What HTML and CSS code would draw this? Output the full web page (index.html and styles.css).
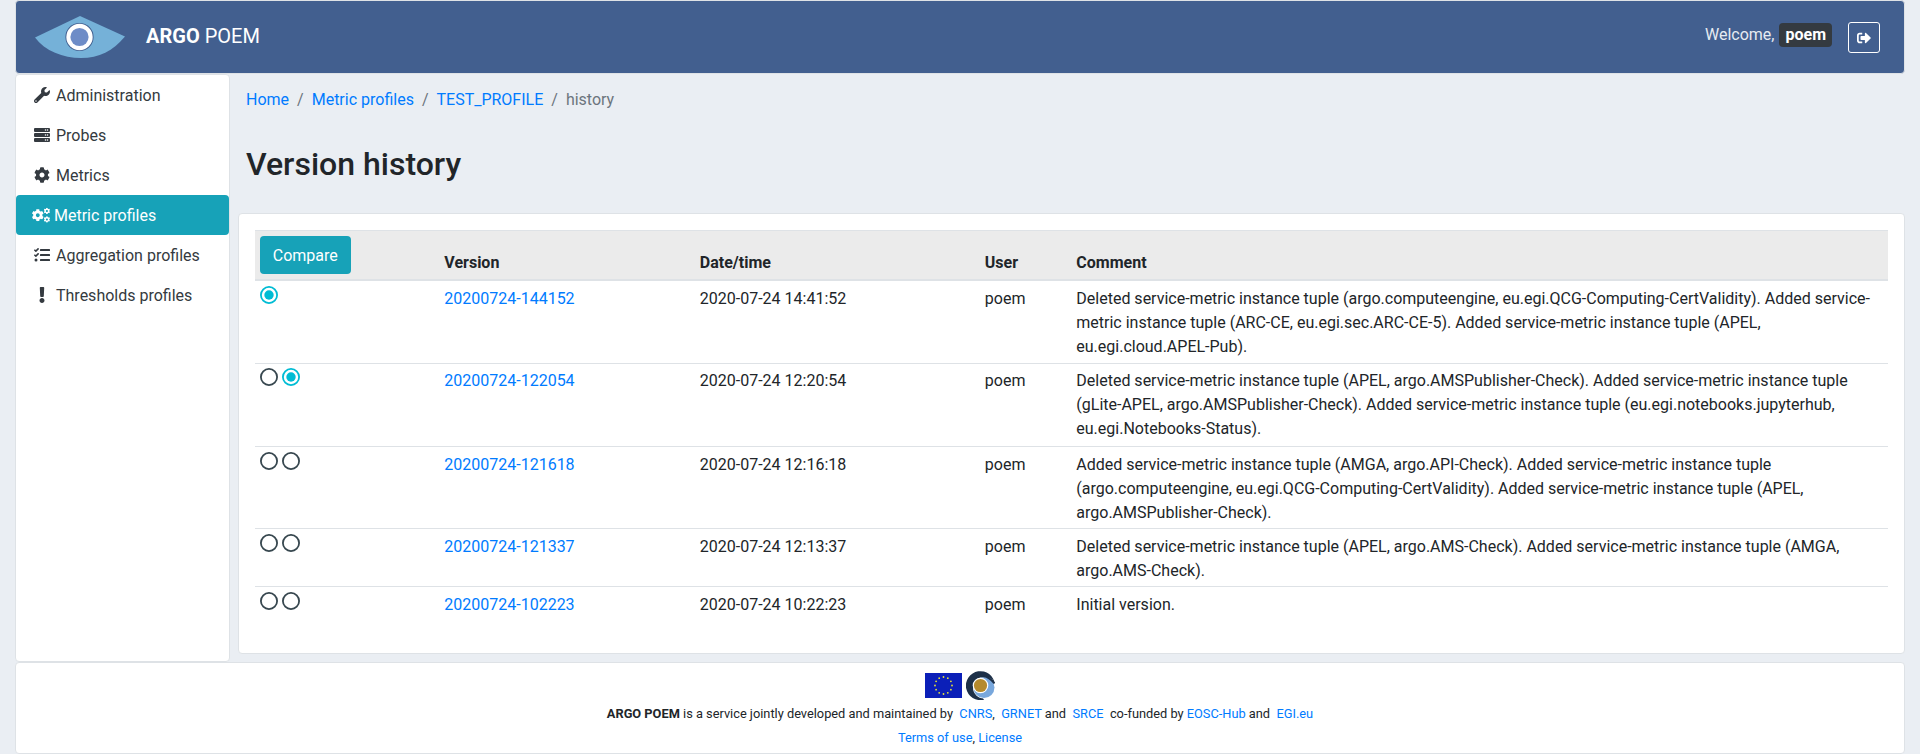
FILE: index.html
```html
<!DOCTYPE html>
<html lang="en">
<head>
<meta charset="utf-8">
<title>ARGO POEM</title>
<link rel="stylesheet" href="styles.css">
</head>
<body>
<svg class="defs" width="0" height="0">
  <symbol id="cog" viewBox="0 0 512 512"><path d="M487.4 315.7l-42.6-24.6c4.3-23.2 4.3-47 0-70.2l42.6-24.6c4.9-2.8 7.1-8.6 5.5-14-11.1-35.6-30-67.8-54.7-94.6-3.8-4.1-10-5.1-14.8-2.3L380.8 110c-17.9-15.4-38.5-27.3-60.8-35.1V25.8c0-5.6-3.9-10.5-9.4-11.7-36.7-8.2-74.3-7.8-109.2 0-5.5 1.2-9.4 6.1-9.4 11.7V75c-22.2 7.9-42.8 19.8-60.8 35.1L88.7 85.5c-4.9-2.8-11-1.9-14.8 2.3-24.7 26.7-43.6 58.9-54.7 94.6-1.7 5.4.6 11.2 5.5 14L67.3 221c-4.3 23.2-4.3 47 0 70.2l-42.6 24.6c-4.9 2.8-7.1 8.6-5.5 14 11.1 35.6 30 67.8 54.7 94.6 3.8 4.1 10 5.1 14.8 2.3l42.6-24.6c17.9 15.4 38.5 27.3 60.8 35.1v49.2c0 5.6 3.9 10.5 9.4 11.7 36.7 8.2 74.3 7.8 109.2 0 5.5-1.2 9.4-6.1 9.4-11.7v-49.2c22.2-7.9 42.8-19.8 60.8-35.1l42.6 24.6c4.9 2.8 11 1.9 14.8-2.3 24.7-26.7 43.6-58.9 54.7-94.6 1.5-5.5-.7-11.3-5.6-14.1zM256 336c-44.1 0-80-35.9-80-80s35.9-80 80-80 80 35.9 80 80-35.9 80-80 80z"/></symbol>
  <symbol id="radio-off" viewBox="0 0 18 18"><circle cx="9" cy="9" r="8.1" fill="#fff" stroke="#37474f" stroke-width="1.8"/></symbol>
  <symbol id="radio-on" viewBox="0 0 18 18"><circle cx="9" cy="9" r="8.1" fill="#fff" stroke="#00bcd4" stroke-width="1.8"/><circle cx="9" cy="9" r="4.7" fill="#00bcd4"/></symbol>
</svg>
<div class="container">
  <header class="navbar">
    <svg class="logo" viewBox="0 0 90 42"><path d="M0 21.5L45 0l45 20.5C78 35 64 42 46 42S10 35 0 21.5z" fill="#75b1d8"/><circle cx="44.5" cy="21" r="14.1" fill="#3f5d8e"/><circle cx="44.5" cy="21" r="13.2" fill="#fff"/><circle cx="44.5" cy="21" r="9.1" fill="#6d8cc7"/></svg>
    <span class="brand"><strong>ARGO</strong> POEM</span>
    <span class="welcome">Welcome, <span class="user">poem</span></span>
    <button class="logout" aria-label="Log out"><svg viewBox="0 0 512 512" width="14" height="14"><path d="M497 273L329 441c-15 15-41 4.500-41-17v-96H152c-13.300 0-24-10.700-24-24v-96c0-13.300 10.700-24 24-24h136V88c0-21.400 25.900-32 41-17l168 168c9.300 9.400 9.300 24.600 0 34zM192 436v-40c0-6.600-5.400-12-12-12H96c-17.700 0-32-14.300-32-32V160c0-17.700 14.300-32 32-32h84c6.600 0 12-5.400 12-12V76c0-6.600-5.400-12-12-12H96c-53 0-96 43-96 96v192c0 53 43 96 96 96h84c6.600 0 12-5.400 12-12z"/></svg></button>
  </header>
  <div class="body">
    <nav class="sidebar">
      <a class="item"><svg class="icon" viewBox="0 0 512 512"><path d="M507.73 109.1c-2.24-9.03-13.54-12.09-20.12-5.51l-74.36 74.36-67.88-11.31-11.31-67.88 74.36-74.36c6.62-6.62 3.43-17.9-5.66-20.16-47.38-11.74-99.55.91-136.58 37.93-39.64 39.64-50.55 97.1-34.05 147.2L18.74 402.76c-24.99 24.99-24.99 65.51 0 90.5 24.99 24.99 65.51 24.99 90.5 0l213.21-213.21c50.12 16.71 107.47 5.68 147.37-34.22 37.07-37.07 49.7-89.32 37.91-136.73zM64 472c-13.25 0-24-10.75-24-24 0-13.26 10.75-24 24-24s24 10.74 24 24c0 13.25-10.75 24-24 24z"/></svg>Administration</a>
      <a class="item"><svg class="icon" viewBox="0 0 512 512"><rect y="32" width="512" height="128" rx="32"/><rect y="192" width="512" height="128" rx="32"/><rect y="352" width="512" height="128" rx="32"/><g fill="#fff"><circle cx="368" cy="96" r="24"/><circle cx="432" cy="96" r="24"/><circle cx="368" cy="256" r="24"/><circle cx="432" cy="256" r="24"/><circle cx="368" cy="416" r="24"/><circle cx="432" cy="416" r="24"/></g></svg>Probes</a>
      <a class="item"><svg class="icon" viewBox="0 0 512 512"><use href="#cog"/></svg>Metrics</a>
      <a class="item active"><svg class="icon wide" viewBox="0 0 640 512"><use href="#cog" x="-14" y="36" width="440" height="440"/><use href="#cog" x="414" y="-10" width="232" height="232"/><use href="#cog" x="414" y="290" width="232" height="232"/></svg>Metric profiles</a>
      <a class="item"><svg class="icon" viewBox="0 0 512 512"><path d="M139.61 35.5a12 12 0 0 0-17 0L58.93 98.81l-22.7-22.12a12 12 0 0 0-17 0L3.53 92.41a12 12 0 0 0 0 17l47.59 47.4a12.78 12.78 0 0 0 17.61 0l15.59-15.62L156.52 69a12.09 12.09 0 0 0 .09-17zm0 159.19a12 12 0 0 0-17 0l-63.68 63.72-22.7-22.1a12 12 0 0 0-17 0L3.53 252a12 12 0 0 0 0 17L51 316.5a12.77 12.77 0 0 0 17.6 0l15.7-15.69 72.2-72.22a12 12 0 0 0 .09-16.9z"/><circle cx="64" cy="416" r="48"/><rect x="192" y="64" width="320" height="64" rx="16"/><rect x="192" y="224" width="320" height="64" rx="16"/><rect x="192" y="384" width="320" height="64" rx="16"/></svg>Aggregation profiles</a>
      <a class="item"><svg class="icon" viewBox="-160 0 512 512"><path d="M176 432c0 44.112-35.888 80-80 80s-80-35.888-80-80 35.888-80 80-80 80 35.888 80 80zM25.26 25.199l13.6 272C39.499 309.972 50.041 320 62.83 320h66.34c12.789 0 23.331-10.028 23.97-22.801l13.6-272C167.425 11.49 156.496 0 142.77 0H49.23C35.504 0 24.575 11.49 25.26 25.199z"/></svg>Thresholds profiles</a>
    </nav>
    <main class="main">
      <ol class="breadcrumb"><li><a>Home</a></li><li><a>Metric profiles</a></li><li><a>TEST_PROFILE</a></li><li>history</li></ol>
      <h2 class="title">Version history</h2>
      <section class="card">
        <table class="versions">
          <colgroup><col class="c-pick"><col class="c-version"><col class="c-date"><col class="c-user"><col></colgroup>
          <thead><tr><th><button class="compare">Compare</button></th><th>Version</th><th>Date/time</th><th>User</th><th>Comment</th></tr></thead>
          <tbody>
            <tr class="first"><td><div class="radios"><svg><use href="#radio-on"/></svg></div></td><td><a>20200724-144152</a></td><td>2020-07-24 14:41:52</td><td>poem</td><td>Deleted service-metric instance tuple (argo.computeengine, eu.egi.QCG-Computing-CertValidity). Added service-metric instance tuple (ARC-CE, eu.egi.sec.ARC-CE-5). Added service-metric instance tuple (APEL, eu.egi.cloud.APEL-Pub).</td></tr>
            <tr class="second"><td><div class="radios"><svg><use href="#radio-off"/></svg><svg><use href="#radio-on"/></svg></div></td><td><a>20200724-122054</a></td><td>2020-07-24 12:20:54</td><td>poem</td><td>Deleted service-metric instance tuple (APEL, argo.AMSPublisher-Check). Added service-metric instance tuple (gLite-APEL, argo.AMSPublisher-Check). Added service-metric instance tuple (eu.egi.notebooks.jupyterhub, eu.egi.Notebooks-Status).</td></tr>
            <tr class="third"><td><div class="radios"><svg><use href="#radio-off"/></svg><svg><use href="#radio-off"/></svg></div></td><td><a>20200724-121618</a></td><td>2020-07-24 12:16:18</td><td>poem</td><td>Added service-metric instance tuple (AMGA, argo.API-Check). Added service-metric instance tuple (argo.computeengine, eu.egi.QCG-Computing-CertValidity). Added service-metric instance tuple (APEL, argo.AMSPublisher-Check).</td></tr>
            <tr class="fourth"><td><div class="radios"><svg><use href="#radio-off"/></svg><svg><use href="#radio-off"/></svg></div></td><td><a>20200724-121337</a></td><td>2020-07-24 12:13:37</td><td>poem</td><td>Deleted service-metric instance tuple (APEL, argo.AMS-Check). Added service-metric instance tuple (AMGA, argo.AMS-Check).</td></tr>
            <tr><td><div class="radios"><svg><use href="#radio-off"/></svg><svg><use href="#radio-off"/></svg></div></td><td><a>20200724-102223</a></td><td>2020-07-24 10:22:23</td><td>poem</td><td>Initial version.</td></tr>
          </tbody>
        </table>
      </section>
    </main>
  </div>
  <footer class="footer">
    <div class="logos">
      <svg width="37" height="25" viewBox="0 0 37 25"><rect width="37" height="25" fill="#0b1fb8"/><g fill="#e8e337"><circle cx="18.500" cy="4" r=".9"/><circle cx="22.800" cy="5.200" r=".9"/><circle cx="25.900" cy="8.300" r=".9"/><circle cx="27" cy="12.500" r=".9"/><circle cx="25.900" cy="16.700" r=".9"/><circle cx="22.800" cy="19.800" r=".9"/><circle cx="18.500" cy="21" r=".9"/><circle cx="14.200" cy="19.800" r=".9"/><circle cx="11.100" cy="16.700" r=".9"/><circle cx="10" cy="12.500" r=".9"/><circle cx="11.100" cy="8.300" r=".9"/><circle cx="14.200" cy="5.200" r=".9"/></g></svg>
      <svg width="29" height="29" viewBox="0 0 29 29"><path d="M28.800 13A14.500 14.500 0 1 0 18 28.700L15 24l11-16z" fill="#1d3048"/><circle cx="18" cy="16.500" r="11" fill="#fff"/><circle cx="18" cy="16.500" r="10.500" fill="#78a7dc"/><path d="M8.500 9C13 4 21 3 28.500 12.500" fill="none" stroke="#1d3048" stroke-width="2"/><circle cx="14.500" cy="14.500" r="7.800" fill="#fff"/><circle cx="14.500" cy="14.500" r="6.600" fill="#b58a2d"/></svg>
    </div>
    <p><strong>ARGO POEM</strong> is a service jointly developed and maintained by&nbsp; <a>CNRS</a>,&nbsp; <a>GRNET</a> and&nbsp; <a>SRCE</a>&nbsp; co-funded by <a>EOSC-Hub</a> and&nbsp; <a>EGI.eu</a></p>
    <p><a>Terms of use</a>, <a>License</a></p>
  </footer>
</div>
</body>
</html>
```
FILE: styles.css
```css
* { box-sizing: border-box; }
body { margin: 0; background: #eaeef3; color: #212529; font: 16px/24px Roboto, sans-serif; overflow: hidden; }
a { color: #007bff; }
strong { font-weight: 700; }
.defs { display: block; height: 0; }
.container { padding: 0 15px; height: 754px; display: flex; flex-direction: column; }
.navbar { height: 74px; flex: none; background: #425f8f; border: 1px solid #dee2e6; border-radius: 4px; display: flex; align-items: center; padding: 0 24px 0 19px; color: #fff; }
.logo { width: 90px; height: 42px; margin-bottom: 1px; }
.brand { font-size: 20px; line-height: 30px; margin: 0 auto 2px 21px; font-weight: 400; }
.welcome { color: #e6ebf2; margin-bottom: 5px; }
.user { display: inline-block; margin-left: 1px; background: #343a40; color: #fff; font-weight: 700; border-radius: 4px; padding: 0 6px; }
.logout { width: 32px; height: 31px; margin: 1px 0 0 16px; padding: 0; border: 1px solid #fff; border-radius: 3px; background: none; display: flex; align-items: center; justify-content: center; }
.logout svg { fill: #fff; }
.body { display: flex; height: 588px; flex: none; }
.sidebar { width: 215px; flex: none; background: #fff; border: 1px solid #dee2e6; border-radius: 4px; }
.item { display: flex; align-items: center; height: 40px; padding: 2px 0 0 18px; color: #343a40; border-radius: 4px; }
.icon { width: 16px; height: 16px; margin: 0 6px 2px 0; fill: currentColor; flex: none; overflow: visible; }
.wide { width: 18px; height: 14.4px; margin-right: 4px; }
.active { background: #17a2b8; color: #fff; padding-left: 16px; }
.main { flex: 1; padding-left: 8px; }
.breadcrumb { display: flex; list-style: none; margin: 14px 0 0; padding: 0 8px; color: #6c757d; }
.breadcrumb li + li::before { content: "/"; padding: 0 8px; }
.title { margin: 33px 8px 30px; font-size: 32px; line-height: 38px; font-weight: 500; }
.card { height: 441px; background: #fff; border: 1px solid #dee2e6; border-radius: 4px; padding: 16px; }
.versions { width: 100%; table-layout: fixed; border-collapse: separate; border-spacing: 0; }
.c-pick { width: 184.5px; }
.c-version { width: 255.5px; }
.c-date { width: 285px; }
.c-user { width: 91.5px; }
th, td { text-align: left; border-top: 1px solid #dee2e6; }
th { padding: 5px 4.8px 4px; vertical-align: bottom; background: #ebebeb; border-bottom: 2px solid #dee2e6; font-weight: 700; }
th:first-child { padding-bottom: 5px; }
td { padding: 6px 4.8px 0; height: 58px; vertical-align: top; }
td:first-child { padding-top: 5px; }
.first td { border-top: 0; height: 82px; }
.second td { height: 83px; padding-top: 5px; }
.second td:first-child { padding-top: 4px; }
.third td { height: 82px; }
.compare { display: block; width: 91px; height: 38px; border: 0; border-radius: 4px; background: #17a2b8; color: #fff; font: 16px/24px Roboto, sans-serif; padding: 2px 0 0; }
.radios { display: flex; gap: 4px; height: 18px; }
.radios svg { width: 18px; height: 18px; }
.footer { height: 92px; flex: none; background: #fff; border: 1px solid #dee2e6; border-radius: 4px; padding-top: 8px; text-align: center; font-size: 12.8px; }
.logos { display: flex; justify-content: center; align-items: center; gap: 4px; height: 29px; margin-bottom: 2px; }
.footer p { margin: 0; }
```
